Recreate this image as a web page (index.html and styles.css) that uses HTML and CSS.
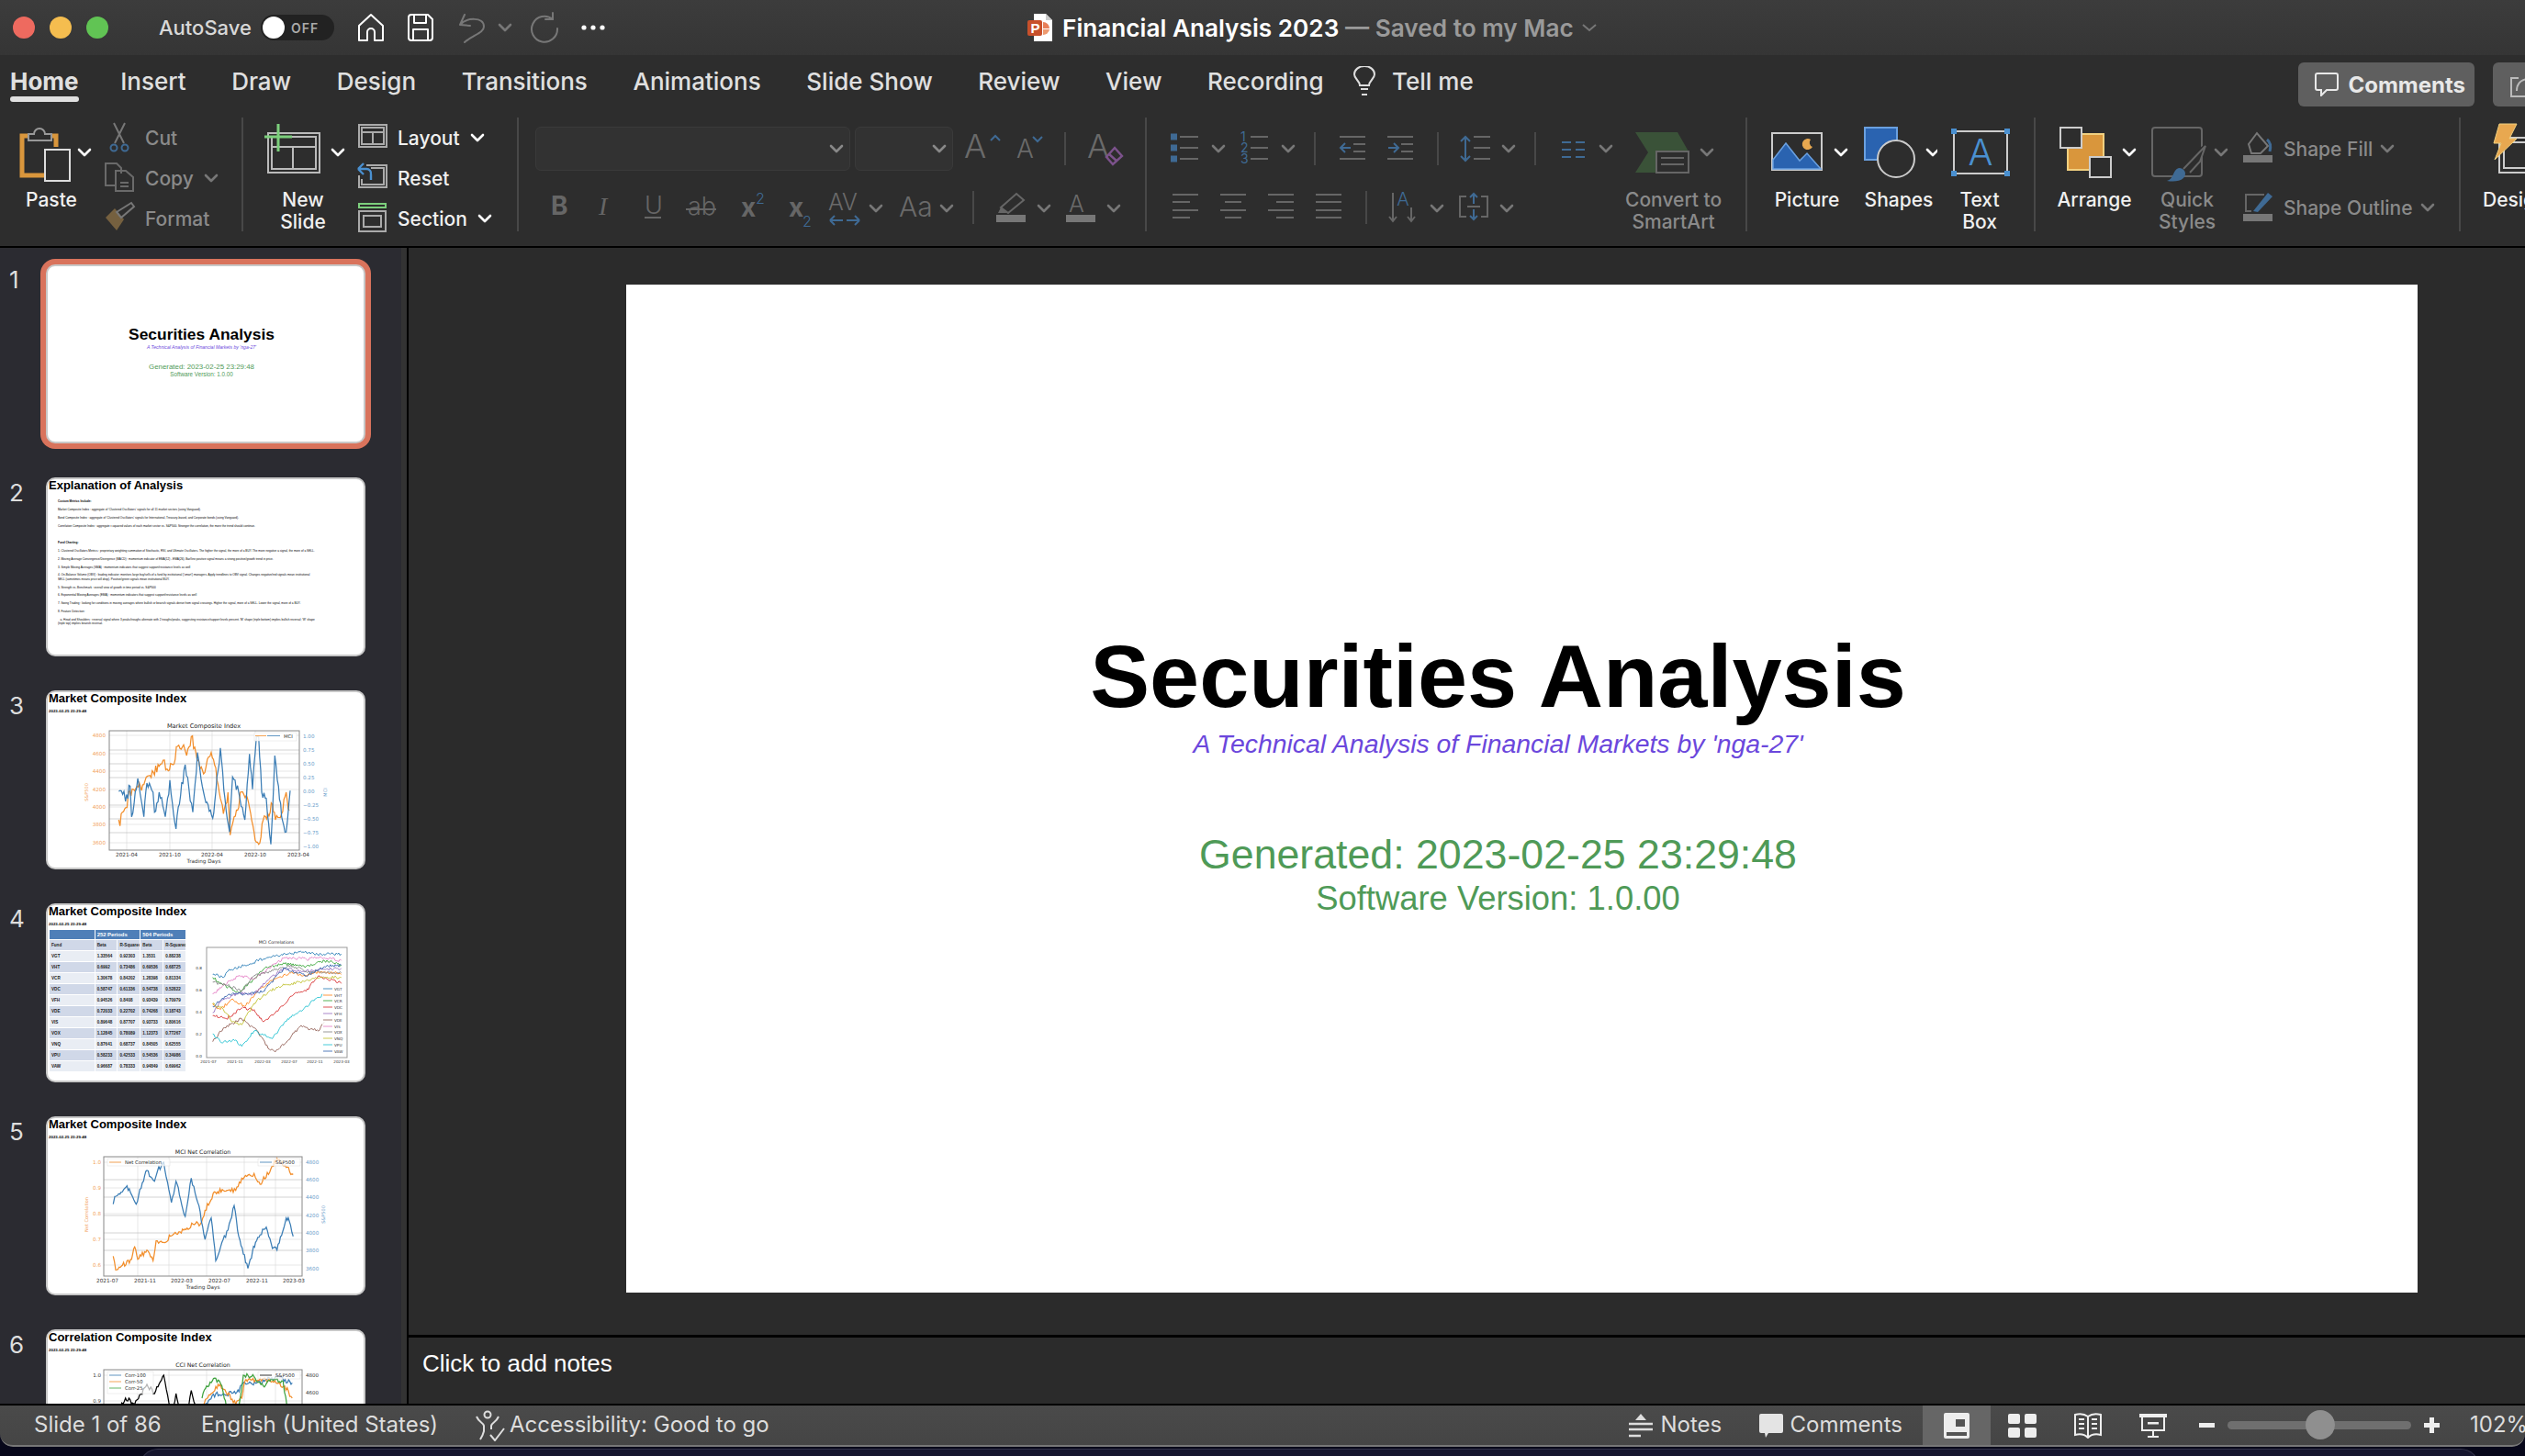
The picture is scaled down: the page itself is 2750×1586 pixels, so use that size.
FILE: index.html
```html
<!DOCTYPE html>
<html lang="en">
<head>
    <meta charset="UTF-8">
    <title>Financial Analysis 2023</title>
    <link rel="stylesheet" href="styles.css">
</head>
<body>

<svg class="sprite"><defs>
    <path id="chev" d="M-6 -3 L0 3 L6 -3" fill="none" stroke-width="2.6" stroke-linecap="round" stroke-linejoin="round"/>
</defs></svg>

<div class="behind"></div>

<div class="window">

    <header class="titlebar">
        <div class="lights">
            <span class="light red"></span>
            <span class="light yellow"></span>
            <span class="light green"></span>
        </div>
        <span class="autosave">AutoSave</span>
        <div class="toggle"><span class="knob"></span><span class="toggle-text">OFF</span></div>
        <svg class="qa-home" width="30" height="32" viewBox="0 0 30 32"><path d="M2 14 L15 2 L28 14 V30 H19 V21 A4 4 0 0 0 11 21 V30 H2 Z" fill="none" stroke="#fff" stroke-width="2" stroke-linejoin="round"/></svg>
        <svg class="qa-save" width="28" height="30" viewBox="0 0 28 30"><path d="M4 1 H22 L27 6 V26 A3 3 0 0 1 24 29 H4 A3 3 0 0 1 1 26 V4 A3 3 0 0 1 4 1 Z M7 1 V10 H20 V1 M6 29 V17 H22 V29" fill="none" stroke="#fff" stroke-width="2" stroke-linejoin="round"/></svg>
        <svg class="qa-undo" width="62" height="34" viewBox="0 0 62 34"><path d="M1 14 L6 3 M1 14 L12 15 M1 14 C8 6 27 5 27 16 C27 23 15 25 6 33" fill="none" stroke="#777" stroke-width="2" stroke-linecap="round"/><use href="#chev" x="50" y="17" stroke="#777"/></svg>
        <svg class="qa-redo" width="34" height="34" viewBox="0 0 34 34"><path d="M26 8 A14 14 0 1 0 31 18 M26 1 V8 H18" fill="none" stroke="#777" stroke-width="2" stroke-linecap="round"/></svg>
        <svg class="qa-more" width="26" height="6" viewBox="0 0 26 6"><circle cx="3" cy="3" r="2.6" fill="#fff"/><circle cx="13" cy="3" r="2.6" fill="#fff"/><circle cx="23" cy="3" r="2.6" fill="#fff"/></svg>
        <svg class="doc-icon" width="28" height="30" viewBox="0 0 28 30"><path d="M7 0 H20 L27 7 V30 H7 Z" fill="#fff"/><path d="M20 0 L27 7 H20 Z" fill="#ccc"/><rect x="0" y="7" width="16" height="17" rx="2" fill="#c8502b"/><path d="M17 9 A7 7 0 0 1 24 16 H17 Z" fill="#e8805a"/><path d="M17 17 H24 A7 7 0 0 1 17 23 Z" fill="#ee9a70"/><text x="3.5" y="21" class="doc-letter">P</text></svg>
        <span class="doc-title"><b>Financial Analysis 2023</b><span class="doc-saved"> — Saved to my Mac</span></span>
        <svg class="doc-chev" width="16" height="10" viewBox="0 0 16 10"><path d="M1 2 L8 8 L15 2" fill="none" stroke="#777" stroke-width="2"/></svg>
    </header>

    <nav class="tabs">
        <a class="tab active">Home</a>
        <a class="tab">Insert</a>
        <a class="tab">Draw</a>
        <a class="tab">Design</a>
        <a class="tab">Transitions</a>
        <a class="tab">Animations</a>
        <a class="tab">Slide Show</a>
        <a class="tab">Review</a>
        <a class="tab">View</a>
        <a class="tab">Recording</a>
        <div class="tell-me">
            <svg width="24" height="32" viewBox="0 0 24 32"><path d="M7 21 C7 16 1 14 1 9 A11 9 0 0 1 23 9 C23 14 17 16 17 21 Z M8 25 H16 M9 31 H15" fill="none" stroke="#ddd" stroke-width="2"/></svg>
            <span>Tell me</span>
        </div>
        <button class="tab-btn comments-btn">
            <svg width="26" height="26" viewBox="0 0 26 26"><path d="M3 1 H23 A2 2 0 0 1 25 3 V17 A2 2 0 0 1 23 19 H13 L7 25 V19 H3 A2 2 0 0 1 1 17 V3 A2 2 0 0 1 3 1 Z" fill="none" stroke="#e8e8e8" stroke-width="2"/></svg>
            Comments
        </button>
        <button class="tab-btn share-btn">
            <svg width="30" height="30" viewBox="0 0 30 30"><path d="M10 8 H2 V28 H28 M8 22 C8 12 15 9 22 9 M18 3 L24 9 L18 15" fill="none" stroke="#bbb" stroke-width="2"/></svg>
        </button>
    </nav>

    <section class="ribbon">

        <div class="group clipboard">
            <div class="big paste-btn">
                <svg width="112" height="78" viewBox="0 128 112 78">
                    <path d="M30 148 H24 V191 H50 M56 148 H61 V160" fill="none" stroke="#d9963c" stroke-width="5"/>
                    <path d="M31 153 V146 H37 A6 6 0 0 1 49 146 H56 V153 Z" fill="#2d2d2d" stroke="#999" stroke-width="2"/>
                    <rect x="49" y="163" width="27" height="34" fill="#2d2d2d" stroke="#ddd" stroke-width="2"/>
                    <use href="#chev" x="92" y="166" stroke="#fff"/>
                </svg>
                <span class="big-label">Paste</span>
            </div>
            <div class="stack">
                <div class="small off">
                    <svg width="46" height="44" viewBox="112 129 46 44"><path d="M124 135 L135 157 M136 135 L125 157" stroke="#777" stroke-width="2" fill="none"/><circle cx="124" cy="162" r="3.5" fill="none" stroke="#3f6a94" stroke-width="2"/><circle cx="136" cy="162" r="3.5" fill="none" stroke="#3f6a94" stroke-width="2"/></svg>
                    <span>Cut</span>
                </div>
                <div class="small off">
                    <svg width="46" height="44" viewBox="112 173 46 44"><path d="M125 203 H115 V179 H127 L132 184 V190 M126 187 H137 L145 194 V209 H126 Z M131 200 H140 M131 204 H140" fill="none" stroke="#6a6a6a" stroke-width="2"/></svg>
                    <span>Copy</span>
                    <svg class="tail" width="16" height="10" viewBox="-8 -5 16 10"><use href="#chev" stroke="#777"/></svg>
                </div>
                <div class="small off">
                    <svg width="46" height="44" viewBox="112 217 46 44"><path d="M115 238 L125 228 L135 240 L127 252 Z" fill="#75603f"/><path d="M127 232 L143 222 L146 226 L132 238 Z" fill="none" stroke="#777" stroke-width="2"/></svg>
                    <span>Format</span>
                </div>
            </div>
        </div>
        <div class="sep"></div>

        <div class="group slides">
            <div class="big new-slide-btn">
                <svg width="120" height="78" viewBox="265 128 120 78">
                    <path d="M292 145 H348 V188 H292 Z M296 149 H344 V184 H296 Z M296 160 H344 M319 160 V184" fill="none" stroke="#bbb" stroke-width="2"/>
                    <path d="M303 135 V165 M288 149 H318" stroke="#7ccf7c" stroke-width="3"/>
                    <use href="#chev" x="368" y="166" stroke="#fff"/>
                </svg>
                <span class="big-label">New<br>Slide</span>
            </div>
            <div class="stack">
                <div class="small">
                    <svg width="48" height="44" viewBox="385 129 48 44"><path d="M391 137 H421 V161 H391 Z M394 140 H418 V158 H394 Z M394 145 H418 M406 145 V158" fill="none" stroke="#aaa" stroke-width="2"/></svg>
                    <span>Layout</span>
                    <svg class="tail" width="16" height="10" viewBox="-8 -5 16 10"><use href="#chev" stroke="#fff"/></svg>
                </div>
                <div class="small">
                    <svg width="48" height="44" viewBox="385 173 48 44"><path d="M399 181 H421 V205 H391 V192 M394 196 V202 H418 V184 H404" fill="none" stroke="#aaa" stroke-width="2"/><path d="M390 185 L396 179 M390 185 L396 191 M390 185 H399 A5 5 0 0 1 404 191 V197" fill="none" stroke="#4a90d0" stroke-width="2.4"/></svg>
                    <span>Reset</span>
                </div>
                <div class="small">
                    <svg width="48" height="44" viewBox="385 217 48 44"><rect x="391" y="223" width="29" height="4" fill="none" stroke="#7ccf7c" stroke-width="2"/><path d="M391 231 H420 V253 H391 Z M396 236 H415 V248 H396 Z" fill="none" stroke="#aaa" stroke-width="2"/></svg>
                    <span>Section</span>
                    <svg class="tail" width="16" height="10" viewBox="-8 -5 16 10"><use href="#chev" stroke="#fff"/></svg>
                </div>
            </div>
        </div>
        <div class="sep"></div>

        <div class="group font-group">
            <div class="font-row">
                <div class="dropdown font-name"><svg width="16" height="10" viewBox="-8 -5 16 10"><use href="#chev" stroke="#888"/></svg></div>
                <div class="dropdown font-size"><svg width="16" height="10" viewBox="-8 -5 16 10"><use href="#chev" stroke="#888"/></svg></div>
                <svg class="font-tools" width="198" height="50" viewBox="1042 138 198 50">
                    <text x="1050" y="172" class="ico-a big-a">A</text>
                    <path d="M1079 153 L1084 148 L1089 153" fill="none" stroke="#3f6a94" stroke-width="2"/>
                    <text x="1107" y="172" class="ico-a mid-a">A</text>
                    <path d="M1125 149 L1130 154 L1135 149" fill="none" stroke="#3f6a94" stroke-width="2"/>
                    <path d="M1160 144 V180" stroke="#484848" stroke-width="2"/>
                    <text x="1184" y="172" class="ico-a big-a">A</text>
                    <path d="M1205 171 L1214 161 L1222 170 L1212 179 Z M1208 168 L1217 176" fill="none" stroke="#7c528c" stroke-width="2.4"/>
                </svg>
            </div>
            <svg class="font-row2" width="650" height="50" viewBox="590 205 650 50">
                <text x="600" y="234" class="ico-b">B</text>
                <text x="652" y="234" class="ico-i">I</text>
                <text x="702" y="233" class="ico-u">U</text>
                <path d="M702 237 H720" stroke="#666" stroke-width="2"/>
                <text x="749" y="234" class="ico-u">ab</text>
                <path d="M747 228 H780" stroke="#666" stroke-width="2"/>
                <text x="807" y="236" class="ico-b">x</text>
                <text x="823" y="222" class="ico-sub">2</text>
                <text x="859" y="236" class="ico-b">x</text>
                <text x="874" y="247" class="ico-sub">2</text>
                <text x="902" y="229" class="ico-a av">AV</text>
                <path d="M904 240 H918 M904 240 L909 235 M904 240 L909 245 M936 240 H922 M936 240 L931 235 M936 240 L931 245" fill="none" stroke="#3f6a94" stroke-width="2"/>
                <use href="#chev" x="954" y="227" stroke="#777"/>
                <text x="979" y="236" class="ico-a aa">Aa</text>
                <use href="#chev" x="1031" y="227" stroke="#777"/>
                <path d="M1060 208 V244" stroke="#484848" stroke-width="2"/>
                <path d="M1090 226 L1107 211 L1115 218 L1098 232 Z" fill="none" stroke="#666" stroke-width="2"/>
                <path d="M1087 232 L1090 226 L1097 232 Z" fill="#666"/>
                <rect x="1085" y="234" width="32" height="8" fill="#777"/>
                <use href="#chev" x="1137" y="227" stroke="#777"/>
                <text x="1164" y="231" class="ico-a av">A</text>
                <rect x="1161" y="234" width="32" height="8" fill="#777"/>
                <use href="#chev" x="1213" y="227" stroke="#777"/>
            </svg>
        </div>
        <div class="sep"></div>

        <div class="group para-group">
            <div class="para-rows">
                <svg width="521" height="50" viewBox="1249 138 521 50">
                    <path d="M1275 149 H1282 M1275 161 H1282 M1275 173 H1282" stroke="#3f6a94" stroke-width="7"/>
                    <path d="M1285 149 H1305 M1285 161 H1305 M1285 173 H1305" stroke="#666" stroke-width="2"/>
                    <use href="#chev" x="1327" y="162" stroke="#777"/>
                    <text x="1351" y="154" class="ico-num">1</text><text x="1351" y="166" class="ico-num">2</text><text x="1351" y="178" class="ico-num">3</text>
                    <path d="M1362 149 H1381 M1362 161 H1381 M1362 173 H1381" stroke="#666" stroke-width="2"/>
                    <use href="#chev" x="1403" y="162" stroke="#777"/>
                    <path d="M1432 144 V180" stroke="#484848" stroke-width="2"/>
                    <path d="M1459 149 H1487 M1474 157 H1487 M1474 165 H1487 M1459 173 H1487 M1511 149 H1539 M1526 157 H1539 M1526 165 H1539 M1511 173 H1539" stroke="#666" stroke-width="2"/>
                    <path d="M1471 161 H1460 M1465 156 L1460 161 L1465 166 M1512 161 H1523 M1518 156 L1523 161 L1518 166" fill="none" stroke="#3f6a94" stroke-width="2"/>
                    <path d="M1566 144 V180" stroke="#484848" stroke-width="2"/>
                    <path d="M1596 150 V174 M1591 154 L1596 149 L1601 154 M1591 170 L1596 175 L1601 170" fill="none" stroke="#3f6a94" stroke-width="2"/>
                    <path d="M1605 149 H1623 M1605 161 H1623 M1605 173 H1623" stroke="#666" stroke-width="2"/>
                    <use href="#chev" x="1643" y="162" stroke="#777"/>
                    <path d="M1672 144 V180" stroke="#484848" stroke-width="2"/>
                    <path d="M1701 155 H1711 M1716 155 H1726 M1701 163 H1711 M1716 163 H1726 M1701 171 H1711 M1716 171 H1726" stroke="#3f6a94" stroke-width="2"/>
                    <use href="#chev" x="1749" y="162" stroke="#777"/>
                </svg>
                <svg class="para-row2" width="521" height="50" viewBox="1249 205 521 50">
                    <path d="M1277 212 H1305 M1277 220 H1296 M1277 229 H1305 M1277 237 H1296 M1329 212 H1357 M1334 220 H1352 M1329 229 H1357 M1334 237 H1352 M1381 212 H1409 M1390 220 H1409 M1381 229 H1409 M1390 237 H1409 M1433 212 H1461 M1433 220 H1461 M1433 229 H1461 M1433 237 H1461" stroke="#666" stroke-width="2"/>
                    <path d="M1488 208 V244" stroke="#484848" stroke-width="2"/>
                    <path d="M1517 210 V241 M1513 236 L1517 241 L1521 236 M1537 226 V241 M1533 236 L1537 241 L1541 236" fill="none" stroke="#666" stroke-width="2"/>
                    <text x="1528" y="224" class="ico-a dir-a">A</text>
                    <use href="#chev" x="1565" y="227" stroke="#777"/>
                    <path d="M1597 214 H1590 V236 H1597 M1613 214 H1620 V236 H1613 M1598 225 H1612" fill="none" stroke="#666" stroke-width="2"/>
                    <path d="M1605 222 V211 M1601 215 L1605 211 L1609 215 M1605 228 V239 M1601 235 L1605 239 L1609 235" fill="none" stroke="#3f6a94" stroke-width="2"/>
                    <use href="#chev" x="1641" y="227" stroke="#777"/>
                </svg>
            </div>
            <div class="big off smartart-btn">
                <svg width="102" height="78" viewBox="1770 128 102 78">
                    <path d="M1779 144 H1825 L1837 165 V168 H1802 V188 H1779 L1793 166 Z" fill="#3a5238"/>
                    <rect x="1802" y="165" width="35" height="23" fill="#2d2d2d" stroke="#666" stroke-width="2"/>
                    <path d="M1807 172 H1832 M1807 179 H1832" stroke="#666" stroke-width="2"/>
                    <use href="#chev" x="1857" y="166" stroke="#777"/>
                </svg>
                <span class="big-label">Convert to<br>SmartArt</span>
            </div>
        </div>
        <div class="sep"></div>

        <div class="group insert-group">
            <div class="big picture-btn">
                <svg width="116" height="78" viewBox="1910 128 116 78">
                    <rect x="1930" y="145" width="54" height="40" fill="#2d2d2d" stroke="#ccc" stroke-width="2"/>
                    <path d="M1931 184 V174 L1945 156 L1960 175 L1968 167 L1983 184 Z" fill="#2a63b0" stroke="#6aa0e0" stroke-width="1.5"/>
                    <path d="M1972 152 A6 6 0 1 0 1974 160 A5 5 0 0 1 1972 152 Z" fill="#e8a850"/>
                    <use href="#chev" x="2005" y="166" stroke="#fff"/>
                </svg>
                <span class="big-label">Picture</span>
            </div>
            <div class="big shapes-btn">
                <svg width="84" height="78" viewBox="2026 128 84 78">
                    <rect x="2031" y="139" width="35" height="35" fill="#2a63b0" stroke="#6aa0e0" stroke-width="2"/>
                    <circle cx="2065" cy="173" r="20" fill="#2d2d2d" stroke="#ccc" stroke-width="2"/>
                    <use href="#chev" x="2105" y="166" stroke="#fff"/>
                </svg>
                <span class="big-label">Shapes</span>
            </div>
            <div class="big textbox-btn">
                <svg width="92" height="78" viewBox="2110 128 92 78">
                    <rect x="2128" y="143" width="58" height="46" fill="none" stroke="#ccc" stroke-width="2"/>
                    <path d="M2125 140 h6 v6 h-6 Z M2183 140 h6 v6 h-6 Z M2125 186 h6 v6 h-6 Z M2183 186 h6 v6 h-6 Z" fill="#4a90d0"/>
                    <text x="2157" y="180" class="ico-a box-a">A</text>
                </svg>
                <span class="big-label">Text<br>Box</span>
            </div>
        </div>
        <div class="sep"></div>

        <div class="group arrange-group">
            <div class="big arrange-btn">
                <svg width="96" height="78" viewBox="2233 128 96 78">
                    <rect x="2252" y="146" width="39" height="39" fill="#d9963c" stroke="#f0d080" stroke-width="2"/>
                    <rect x="2244" y="139" width="23" height="22" fill="#2d2d2d" stroke="#ccc" stroke-width="2"/>
                    <rect x="2276" y="171" width="23" height="22" fill="#2d2d2d" stroke="#ccc" stroke-width="2"/>
                    <use href="#chev" x="2319" y="166" stroke="#fff"/>
                </svg>
                <span class="big-label">Arrange</span>
            </div>
            <div class="big off quick-btn">
                <svg width="106" height="78" viewBox="2329 128 106 78">
                    <rect x="2344" y="139" width="54" height="53" rx="3" fill="none" stroke="#666" stroke-width="2"/>
                    <path d="M2376 183 L2402 160" stroke="#2d2d2d" stroke-width="6"/>
                    <path d="M2378 184 L2402 159 L2396 176 L2385 188" fill="#2d2d2d" stroke="#666" stroke-width="2"/>
                    <path d="M2360 197 C2368 195 2366 185 2373 183 C2380 183 2382 190 2378 194 C2374 198 2366 198 2360 197 Z" fill="#3f6a94"/>
                    <use href="#chev" x="2419" y="166" stroke="#777"/>
                </svg>
                <span class="big-label">Quick<br>Styles</span>
            </div>
            <div class="stack stack-two">
                <div class="small off">
                    <svg width="52" height="64" viewBox="2435 131 52 64"><path d="M2449 158 L2458 146 L2470 160 L2462 168 H2452 Z" fill="none" stroke="#777" stroke-width="2"/><path d="M2469 153 C2473 156 2473 162 2472 166" fill="none" stroke="#3f6a94" stroke-width="3"/><rect x="2443" y="170" width="32" height="8" fill="#777"/></svg>
                    <span>Shape Fill</span>
                    <svg class="tail fill-tail" width="16" height="10" viewBox="-8 -5 16 10"><use href="#chev" stroke="#777"/></svg>
                </div>
                <div class="small off">
                    <svg width="52" height="64" viewBox="2435 195 52 64"><path d="M2466 213 H2446 V231 H2452" fill="none" stroke="#666" stroke-width="2"/><path d="M2454 231 L2470 211 L2475 215 L2459 232 Z" fill="#3f6a94"/><rect x="2443" y="234" width="32" height="8" fill="#777"/></svg>
                    <span>Shape Outline</span>
                    <svg class="tail fill-tail" width="16" height="10" viewBox="-8 -5 16 10"><use href="#chev" stroke="#777"/></svg>
                </div>
            </div>
        </div>
        <div class="sep"></div>

        <div class="group designer">
            <div class="big designer-btn">
                <svg width="100" height="78" viewBox="2680 128 100 78">
                    <path d="M2722 150 H2760 V188 H2722 Z M2727 155 H2760 V183 H2727 Z" fill="none" stroke="#ccc" stroke-width="2"/>
                    <path d="M2722 135 H2741 L2733 151 H2741 L2717 174 L2724 156 H2716 Z" fill="#e8a850" stroke="#f0d080" stroke-width="1"/>
                </svg>
                <span class="big-label">Designer</span>
            </div>
        </div>
    </section>

    <div class="workspace">
        <aside class="sidebar">
            <div class="thumb-row">
                <span class="thumb-num">1</span>
                <div class="thumb selected cover">
                    <div class="cover-title">Securities Analysis</div>
                    <div class="cover-sub">A Technical Analysis of Financial Markets by 'nga-27'</div>
                    <div class="cover-gen">Generated: 2023-02-25 23:29:48</div>
                    <div class="cover-ver">Software Version: 1.0.00</div>
                </div>
            </div>

            <div class="thumb-row">
                <span class="thumb-num">2</span>
                <div class="thumb">
                    <div class="thumb-title">Explanation of Analysis</div>
                    <div class="explain">
                        <p class="explain-head">Custom Metrics Include:</p>
                        <p>Market Composite Index : aggregate of 'Clustered Oscillators' signals for all 11 market sectors (using Vanguard).</p>
                        <p>Bond Composite Index : aggregate of 'Clustered Oscillators' signals for International, Treasury-based, and Corporate bonds (using Vanguard).</p>
                        <p>Correlation Composite Index : aggregate r-squared values of each market sector vs. S&amp;P500. Stronger the correlation, the more the trend should continue.</p>
                        <p class="explain-head gap">Fund Charting:</p>
                        <p>1. Clustered Oscillators Metrics : proprietary weighting summation of Stochastic, RSI, and Ultimate Oscillators. The higher the signal, the more of a BUY. The more negative a signal, the more of a SELL.</p>
                        <p>2. Moving Average Convergence/Divergence (MACD) : momentum indicator of EMA(12) - EMA(26). Bar/line positive signal means a strong positive/growth trend in price.</p>
                        <p>3. Simple Moving Averages (SMA) : momentum indicators that suggest support/resistance levels as well</p>
                        <p>4. On-Balance Volume (OBV) : leading indicator; monitors large buy/sells of a fund by institutional ('smart') managers. Apply trendlines to OBV signal. Changes negative/red signals mean institutional SELL (sometimes means price will drop). Positive/green signals mean institutional BUY.</p>
                        <p>5. Strength vs. Benchmark : overall view of growth in time period vs. S&amp;P500</p>
                        <p>6. Exponential Moving Averages (EMA) : momentum indicators that suggest support/resistance levels as well</p>
                        <p>7. Swing Trading : looking for conditions in moving averages where bullish or bearish signals derive from signal crossings. Higher the signal, more of a SELL. Lower the signal, more of a BUY.</p>
                        <p>8. Feature Detection:</p>
                        <p>&nbsp;&nbsp;&nbsp;a. Head and Shoulders : reversal signal where 3 peaks/troughs alternate with 2 troughs/peaks, suggesting resistance/support levels present. 'M' shape (triple bottom) implies bullish reversal; 'W' shape (triple top) implies bearish reversal.</p>
                    </div>
                </div>
            </div>

            <div class="thumb-row">
                <span class="thumb-num">3</span>
                <div class="thumb">
                    <div class="thumb-title">Market Composite Index</div>
                    <div class="thumb-date">2023-02-25 23:29:48</div>
                    <svg class="chart" id="chart3" width="344" height="165" viewBox="2 28 344 165">
                        <text x="172" y="41" class="c-title" text-anchor="middle">Market Composite Index</text>
                        <path d="M69 49 H276 M69 69 H276 M69 88 H276 M69 108 H276 M69 127 H276 M69 146 H276 M69 166 H276 M88 44 V174 M135 44 V174 M181 44 V174 M228 44 V174" stroke="#ddd" stroke-width="0.7"/>
                        <path d="M69 65 H276 M69 80 H276 M69 95 H276 M69 125 H276 M69 140 H276 M69 155 H276" stroke="#c0c0c0" stroke-width="0.7"/>
                        <g class="c-left">
                            <text x="65" y="51">4800</text><text x="65" y="71">4600</text><text x="65" y="90">4400</text><text x="65" y="110">4200</text><text x="65" y="129">4000</text><text x="65" y="148">3800</text><text x="65" y="168">3600</text>
                        </g>
                        <g class="c-right">
                            <text x="280" y="52">1.00</text><text x="280" y="67">0.75</text><text x="280" y="82">0.50</text><text x="280" y="97">0.25</text><text x="280" y="112">0.00</text><text x="280" y="127">−0.25</text><text x="280" y="142">−0.50</text><text x="280" y="157">−0.75</text><text x="280" y="172">−1.00</text>
                        </g>
                        <text class="c-axis orange" transform="translate(46 111) rotate(-90)" text-anchor="middle">S&amp;P500</text>
                        <text class="c-axis blue" transform="translate(306 111) rotate(-90)" text-anchor="middle">MCI</text>
                        <g class="c-x" text-anchor="middle">
                            <text x="88" y="181">2021-04</text><text x="135" y="181">2021-10</text><text x="181" y="181">2022-04</text><text x="228" y="181">2022-10</text><text x="275" y="181">2023-04</text>
                            <text x="172" y="188">Trading Days</text>
                        </g>
                        <g class="lines"></g>
                        <rect x="69" y="44" width="207" height="130" fill="none" stroke="#888" stroke-width="1"/>
                        <rect x="227" y="46" width="46" height="9" fill="#fff" fill-opacity="0.85" stroke="#ddd" stroke-width="0.5"/>
                        <path d="M228 49.5 H240" stroke="#f28e2b" stroke-width="0.8"/><path d="M241 49.5 H255" stroke="#3b7db5" stroke-width="0.8"/>
                        <text x="259" y="51.5" class="c-legend">MCI</text>
                    </svg>
                </div>
            </div>

            <div class="thumb-row">
                <span class="thumb-num">4</span>
                <div class="thumb">
                    <div class="thumb-title">Market Composite Index</div>
                    <div class="thumb-date">2023-02-25 23:29:48</div>
                    <div class="split">
                        <table class="beta-table">
                            <tr class="head"><th></th><th colspan="2">252 Periods</th><th colspan="2">504 Periods</th></tr>
                            <tr class="sub"><td>Fund</td><td>Beta</td><td>R-Squared</td><td>Beta</td><td>R-Squared</td></tr>
                            <tr><td>VGT</td><td>1.33564</td><td>0.92303</td><td>1.3531</td><td>0.88238</td></tr>
                            <tr><td>VHT</td><td>0.6992</td><td>0.73486</td><td>0.69536</td><td>0.68725</td></tr>
                            <tr><td>VCR</td><td>1.30678</td><td>0.84202</td><td>1.28398</td><td>0.81334</td></tr>
                            <tr><td>VDC</td><td>0.58747</td><td>0.61336</td><td>0.54738</td><td>0.52822</td></tr>
                            <tr><td>VFH</td><td>0.94526</td><td>0.8408</td><td>0.93439</td><td>0.70979</td></tr>
                            <tr><td>VDE</td><td>0.72033</td><td>0.22702</td><td>0.74268</td><td>0.18743</td></tr>
                            <tr><td>VIS</td><td>0.89648</td><td>0.87707</td><td>0.93733</td><td>0.80616</td></tr>
                            <tr><td>VOX</td><td>1.12845</td><td>0.78089</td><td>1.12373</td><td>0.77267</td></tr>
                            <tr><td>VNQ</td><td>0.87641</td><td>0.68737</td><td>0.84505</td><td>0.62555</td></tr>
                            <tr><td>VPU</td><td>0.58233</td><td>0.42533</td><td>0.54536</td><td>0.34986</td></tr>
                            <tr><td>VAW</td><td>0.96687</td><td>0.78333</td><td>0.94849</td><td>0.69962</td></tr>
                        </table>
                    </div>
                    <svg class="chart overlay" id="chart4" width="344" height="165" viewBox="2 28 344 165">
                        <text x="251" y="44" class="c-title tiny" text-anchor="middle">MCI Correlations</text>
                        <g class="c-dark" text-anchor="end"><text x="170" y="71.5">0.8</text><text x="170" y="95.5">0.6</text><text x="170" y="119.5">0.4</text><text x="170" y="143.5">0.2</text><text x="170" y="167.5">0.0</text></g>
                        <g class="c-dark" text-anchor="middle"><text x="177" y="174">2021-07</text><text x="206" y="174">2021-11</text><text x="236" y="174">2022-03</text><text x="265" y="174">2022-07</text><text x="293" y="174">2022-11</text><text x="322" y="174">2023-03</text></g>
                        <g class="lines"></g>
                        <rect x="175" y="48" width="153" height="120" fill="none" stroke="#999" stroke-width="1"/>
                        <rect x="301" y="89" width="25" height="75" fill="#fff" fill-opacity="0.85"/>
                        <g class="c-dark"><text x="314" y="95">VGT</text><text x="314" y="102">VHT</text><text x="314" y="108">VCR</text><text x="314" y="115">VDC</text><text x="314" y="122">VFH</text><text x="314" y="129">VDE</text><text x="314" y="136">VIS</text><text x="314" y="142">VOX</text><text x="314" y="149">VNQ</text><text x="314" y="156">VPU</text><text x="314" y="163">VAW</text></g>
                        <g stroke-width="0.8"><path d="M302 93 H312" stroke="#1f77b4"/><path d="M302 100 H312" stroke="#ff7f0e"/><path d="M302 106 H312" stroke="#2ca02c"/><path d="M302 113 H312" stroke="#d62728"/><path d="M302 120 H312" stroke="#9467bd"/><path d="M302 127 H312" stroke="#8c564b"/><path d="M302 134 H312" stroke="#e377c2"/><path d="M302 140 H312" stroke="#7f7f7f"/><path d="M302 147 H312" stroke="#bcbd22"/><path d="M302 154 H312" stroke="#17becf"/><path d="M302 161 H312" stroke="#2a5caa"/></g>
                    </svg>
                </div>
            </div>

            <div class="thumb-row">
                <span class="thumb-num">5</span>
                <div class="thumb">
                    <div class="thumb-title">Market Composite Index</div>
                    <div class="thumb-date">2023-02-25 23:29:48</div>
                    <svg class="chart" id="chart5" width="344" height="165" viewBox="2 28 344 165">
                        <text x="171" y="41" class="c-title small" text-anchor="middle">MCI Net Correlation</text>
                        <path d="M63 50 H279 M63 78 H279 M63 106 H279 M63 134 H279 M63 162 H279 M100 44 V174 M134 44 V174 M175 44 V174 M216 44 V174 M250 44 V174" stroke="#ddd" stroke-width="0.7"/>
                        <path d="M63 69 H279 M63 88 H279 M63 108 H279 M63 127 H279 M63 146 H279" stroke="#c0c0c0" stroke-width="0.7"/>
                        <g class="c-left"><text x="60" y="52">1.0</text><text x="60" y="80">0.9</text><text x="60" y="108">0.8</text><text x="60" y="136">0.7</text><text x="60" y="164">0.6</text></g>
                        <g class="c-right"><text x="283" y="52">4800</text><text x="283" y="71">4600</text><text x="283" y="90">4400</text><text x="283" y="110">4200</text><text x="283" y="129">4000</text><text x="283" y="148">3800</text><text x="283" y="168">3600</text></g>
                        <text class="c-axis orange" transform="translate(46 107) rotate(-90)" text-anchor="middle">Net Correlation</text>
                        <text class="c-axis blue" transform="translate(304 107) rotate(-90)" text-anchor="middle">S&amp;P500</text>
                        <g class="c-x" text-anchor="middle"><text x="67" y="181">2021-07</text><text x="108" y="181">2021-11</text><text x="148" y="181">2022-03</text><text x="189" y="181">2022-07</text><text x="230" y="181">2022-11</text><text x="270" y="181">2023-03</text><text x="171" y="188">Trading Days</text></g>
                        <g class="lines"></g>
                        <rect x="63" y="44" width="216" height="130" fill="none" stroke="#888" stroke-width="1"/>
                        <rect x="67" y="46" width="68" height="8" fill="#fff" fill-opacity="0.7" stroke="#ddd" stroke-width="0.5"/>
                        <path d="M69 50 H82" stroke="#f28e2b" stroke-width="0.8"/><text x="86" y="52" class="c-legend">Net Correlation</text>
                        <rect x="231" y="46" width="46" height="8" fill="#fff" fill-opacity="0.7" stroke="#ddd" stroke-width="0.5"/>
                        <path d="M233 50 H246" stroke="#3b7db5" stroke-width="0.8"/><text x="250" y="52" class="c-legend">S&amp;P500</text>
                    </svg>
                </div>
            </div>

            <div class="thumb-row">
                <span class="thumb-num">6</span>
                <div class="thumb">
                    <div class="thumb-title">Correlation Composite Index</div>
                    <div class="thumb-date">2023-02-25 23:29:48</div>
                    <svg class="chart" id="chart6" width="344" height="165" viewBox="2 28 344 165">
                        <text x="171" y="41" class="c-title small" text-anchor="middle">CCI Net Correlation</text>
                        <path d="M63 50 H279 M63 78 H279 M100 44 V174 M134 44 V174 M175 44 V174 M216 44 V174 M250 44 V174" stroke="#ddd" stroke-width="0.7"/>
                        <g class="c-dark bigger" text-anchor="end"><text x="60" y="52">1.0</text><text x="60" y="80">0.9</text></g>
                        <g class="c-dark bigger"><text x="283" y="52">4800</text><text x="283" y="71">4600</text></g>
                        <g class="lines"></g>
                        <rect x="63" y="44" width="216" height="130" fill="none" stroke="#888" stroke-width="1"/>
                        <rect x="67" y="46" width="50" height="24" fill="#fff" fill-opacity="0.7" stroke="#ddd" stroke-width="0.5"/>
                        <path d="M69 50 H82" stroke="#3b7db5" stroke-width="0.8"/><path d="M69 57 H82" stroke="#f28e2b" stroke-width="0.8"/><path d="M69 64 H82" stroke="#3fa33f" stroke-width="0.8"/>
                        <g class="c-legend-group"><text x="86" y="52">Corr-100</text><text x="86" y="59">Corr-50</text><text x="86" y="66">Corr-25</text></g>
                        <rect x="231" y="46" width="46" height="8" fill="#fff" fill-opacity="0.7" stroke="#ddd" stroke-width="0.5"/>
                        <path d="M233 50 H246" stroke="#000" stroke-width="0.8"/><text x="250" y="52" class="c-legend">S&amp;P500</text>
                    </svg>
                </div>
            </div>
        </aside>
        <div class="side-strip"></div>

        <main class="editor">
            <div class="stage">
                <div class="slide">
                    <h1 class="slide-title">Securities Analysis</h1>
                    <div class="slide-sub">A Technical Analysis of Financial Markets by 'nga-27'</div>
                    <div class="slide-gen">Generated: 2023-02-25 23:29:48</div>
                    <div class="slide-ver">Software Version: 1.0.00</div>
                </div>
            </div>
            <div class="notes">Click to add notes</div>
        </main>
    </div>

    <footer class="statusbar">
        <span class="st-slide">Slide 1 of 86</span>
        <span class="st-lang">English (United States)</span>
        <svg class="st-acc" width="32" height="34" viewBox="0 0 32 34"><circle cx="13" cy="5" r="3.5" fill="none" stroke="#ddd" stroke-width="2"/><path d="M1 7 C4 14 8 13 9 17 V23 C8 27 7 29 5 32 M25 7 C22 14 18 13 17 17 V21 M16 27 L21 33 L31 20" fill="none" stroke="#ddd" stroke-width="2"/></svg>
        <span class="st-acc-text">Accessibility: Good to go</span>
        <svg class="st-notes-ico" width="26" height="26" viewBox="0 0 26 26"><path d="M13 0 L19 7 H7 Z" fill="#ddd"/><path d="M0 11 H26 M0 17 H26 M0 24 H13" stroke="#ddd" stroke-width="2.5"/></svg>
        <span class="st-notes">Notes</span>
        <svg class="st-comment-ico" width="26" height="26" viewBox="0 0 26 26"><path d="M2 0 H24 A2 2 0 0 1 26 2 V19 A2 2 0 0 1 24 21 H10 L7 26 L6 21 H2 A2 2 0 0 1 0 19 V2 A2 2 0 0 1 2 0 Z" fill="#e4e4e4"/></svg>
        <span class="st-comments">Comments</span>
        <div class="view-btn active">
            <svg width="28" height="28" viewBox="0 0 28 28"><path d="M2 0 H26 A2 2 0 0 1 28 2 V26 A2 2 0 0 1 26 28 H2 A2 2 0 0 1 0 26 V2 A2 2 0 0 1 2 0 Z" fill="#eee"/><path d="M3 21 H25 V25 H3 Z" fill="#555"/><rect x="13" y="7" width="10" height="8" fill="#555"/></svg>
        </div>
        <div class="view-btn">
            <svg width="32" height="26" viewBox="0 0 32 26"><rect x="0" y="0" width="13" height="11" rx="2" fill="#eee"/><rect x="18" y="0" width="13" height="11" rx="2" fill="#eee"/><rect x="0" y="15" width="13" height="11" rx="2" fill="#eee"/><rect x="18" y="15" width="13" height="11" rx="2" fill="#eee"/></svg>
        </div>
        <div class="view-btn">
            <svg width="30" height="28" viewBox="0 0 30 28"><path d="M15 4 C11 1 5 1 1 2 V24 C5 23 11 23 15 27 C19 23 25 23 29 24 V2 C25 1 19 1 15 4 Z M15 4 V27 M5 7 H11 M5 12 H11 M5 17 H11 M19 7 H25 M19 12 H25 M19 17 H25" fill="none" stroke="#eee" stroke-width="2"/></svg>
        </div>
        <div class="view-btn">
            <svg width="30" height="26" viewBox="0 0 30 26"><rect x="0" y="0" width="30" height="4" fill="#eee"/><path d="M3 3 V18 H27 V3 M15 18 V25 M9 25 H21" fill="none" stroke="#eee" stroke-width="2"/><rect x="9" y="9" width="12" height="2.5" fill="#eee"/></svg>
        </div>
        <div class="zoomer">
            <span class="zoom-minus"></span>
            <div class="zoom-track"><span class="zoom-knob"></span></div>
            <span class="zoom-plus"></span>
        </div>
        <span class="st-zoom">102%</span>
    </footer>
</div>

<script src="charts.js"></script>
</body>
</html>
```
FILE: styles.css
```css
* {
    box-sizing: border-box;
}
html, body {
    margin: 0;
    width: 2750px;
    height: 1586px;
    overflow: hidden;
}
body {
    position: relative;
    background-color: #07071a;
    font-family: Inter, "Noto Sans", sans-serif;
    color: #e0e0e0;
}
.sprite {
    position: absolute;
    width: 0;
    height: 0;
}
/* the window behind this one, showing under the status bar */
.behind {
    position: absolute;
    left: 152px;
    right: 50px;
    top: 1578px;
    height: 20px;
    border: 1px solid #33334a;
    border-radius: 20px 20px 0 0;
    background-color: #15152e;
}
svg {
    display: block;
    flex: none;
}
.window {
    position: relative;
    width: 2750px;
    height: 1576px;
    display: flex;
    flex-direction: column;
    overflow: hidden;
    border-bottom-left-radius: 14px;
    border-bottom-right-radius: 14px;
}

/* title bar */
.titlebar {
    height: 60px;
    flex: none;
    display: flex;
    align-items: center;
    background: linear-gradient(#3c3c3c, #353535);
    padding-left: 14px;
}
.lights {
    display: flex;
    gap: 16px;
}
.light {
    width: 24px;
    height: 24px;
    border-radius: 50%;
}
.red { background-color: #ee6a5f; }
.yellow { background-color: #f5bd4f; }
.green { background-color: #61c454; }
.autosave {
    margin-left: 55px;
    width: 111px;
    font-size: 22px;
    font-weight: 500;
    color: #d8d8d8;
}
.toggle {
    width: 80px;
    height: 28px;
    border-radius: 14px;
    background-color: #222;
    display: flex;
    align-items: center;
    padding-left: 2px;
}
.knob {
    width: 24px;
    height: 24px;
    border-radius: 50%;
    background-color: #fff;
}
.toggle-text {
    margin-left: 7px;
    font-size: 14px;
    font-weight: 600;
    letter-spacing: 1px;
    color: #aaa;
}
.qa-home { margin-left: 25px; }
.qa-save { margin-left: 25px; }
.qa-undo { margin-left: 28px; }
.qa-redo { margin-left: 14px; }
.qa-more { margin-left: 23px; }
.doc-icon { margin-left: 460px; }
.doc-letter {
    font: 700 15px "Liberation Sans", sans-serif;
    fill: #fff;
}
.doc-title {
    margin-left: 10px;
    font-size: 26.2px;
    font-weight: 600;
    color: #fff;
    white-space: nowrap;
}
.doc-title b {
    font-weight: 600;
}
.doc-saved {
    color: #9a9a9a;
}
.doc-chev { margin-left: 9px; }

/* tabs */
.tabs {
    height: 68px;
    flex: none;
    display: flex;
    align-items: center;
    gap: 49.6px;
    padding: 0 0 12px 11px;
    background-color: #2d2d2d;
}
.tab {
    position: relative;
    font-size: 26px;
    font-weight: 500;
    color: #e0e0e0;
    white-space: nowrap;
}
.tab.active {
    font-weight: 700;
    margin-right: -4px;
}
.tab.active::after {
    content: "";
    position: absolute;
    left: 0;
    right: 0;
    bottom: -7px;
    height: 6px;
    border-radius: 3px;
    background-color: #e0e0e0;
}
.tell-me {
    display: flex;
    align-items: center;
    gap: 18px;
    margin-left: -17px;
    font-size: 26px;
    font-weight: 500;
}
.tab-btn {
    align-self: flex-start;
    margin-top: 8px;
    height: 48px;
    border: none;
    border-radius: 6px;
    background-color: #5f5f5f;
    display: flex;
    align-items: center;
    font-family: inherit;
    font-size: 24px;
    font-weight: 700;
    color: #e8e8e8;
}
.comments-btn {
    margin-left: auto;
    width: 192px;
    padding: 0 0 0 18px;
    gap: 10px;
}
.share-btn {
    margin-left: -30px;
    margin-right: -30px;
    width: 65px;
    flex: none;
    padding: 0 0 0 18px;
}

/* ribbon */
.ribbon {
    height: 142px;
    flex: none;
    display: flex;
    background-color: #2d2d2d;
    border-bottom: 2px solid #000;
    overflow: hidden;
}
.group {
    height: 124px;
    flex: none;
    display: flex;
}
.sep {
    width: 2px;
    height: 124px;
    flex: none;
    background-color: #484848;
}
.clipboard { width: 263px; }
.slides { width: 298px; }
.font-group {
    width: 682px;
    flex-direction: column;
    padding-top: 10px;
}
.para-group { width: 652px; }
.insert-group { width: 312px; padding-left: 7px; }
.arrange-group { width: 461px; padding-left: 16px; }
.designer { width: 100px; }

.big {
    flex: none;
    display: flex;
    flex-direction: column;
    align-items: center;
    font-size: 21px;
    font-weight: 500;
    color: #f0f0f0;
}
.big-label {
    text-align: center;
    line-height: 24px;
    white-space: nowrap;
}
.new-slide-btn .big-label {
    padding-left: 10px;
}
.off {
    color: #8a8a8a;
}
.designer-btn {
    align-items: flex-start;
}
.designer-btn .big-label {
    padding-left: 24px;
}
.stack {
    flex: 1;
}
.small {
    height: 44px;
    display: flex;
    align-items: center;
    font-size: 21px;
    font-weight: 500;
    color: #f0f0f0;
}
.small.off {
    color: #8a8a8a;
}
.tail {
    margin-left: 11px;
}
.fill-tail {
    margin-left: 8px;
}
.stack-two {
    padding-top: 2px;
}
.stack-two .small {
    height: 64px;
}

.font-row {
    display: flex;
    height: 50px;
    padding-left: 18px;
    gap: 5px;
}
.dropdown {
    height: 48px;
    border: 1px solid #3a3a3a;
    border-radius: 6px;
    background-color: #323232;
    display: flex;
    align-items: center;
    justify-content: flex-end;
    padding-right: 6px;
}
.font-name { width: 343px; }
.font-size { width: 107px; }
.font-tools { margin-left: -1px; }
.font-row2 {
    margin: 17px 0 0 25px;
}
.para-rows {
    width: 521px;
    padding-top: 10px;
}
.para-row2 {
    margin-top: 17px;
}

/* icon letters */
.ico-a {
    font-family: Inter, sans-serif;
    font-weight: 300;
    fill: #6a6a6a;
}
.big-a { font-size: 36px; }
.mid-a { font-size: 28px; }
.av { font-size: 25px; }
.aa { font-size: 30px; }
.dir-a { font-size: 20px; text-anchor: middle; fill: #3f6a94; }
.box-a { font-size: 40px; text-anchor: middle; fill: #4a90d0; }
.ico-b {
    font: 700 28px Inter, sans-serif;
    fill: #666;
}
.ico-i {
    font: italic 400 28px "Liberation Serif", serif;
    fill: #666;
}
.ico-u {
    font: 300 27px Inter, sans-serif;
    fill: #666;
}
.ico-sub {
    font: 300 16px Inter, sans-serif;
    fill: #3f6a94;
}
.ico-num {
    font: 400 14px Inter, sans-serif;
    fill: #3f6a94;
}

/* main area */
.workspace {
    flex: 1;
    min-height: 0;
    display: flex;
}
.sidebar {
    width: 437px;
    flex: none;
    background-color: #2b2b31;
    padding-top: 18px;
    display: flex;
    flex-direction: column;
    gap: 37px;
    overflow: hidden;
}
.side-strip {
    width: 8px;
    flex: none;
    background-color: #333;
    border-right: 2px solid #000;
}
.thumb-row {
    display: flex;
    flex: none;
}
.thumb-num {
    width: 50px;
    padding: 0 0 0 10px;
    font-size: 26px;
    font-weight: 400;
    line-height: 34px;
    color: #ddd;
}
.thumb {
    position: relative;
    width: 348px;
    height: 195px;
    flex: none;
    background-color: #fff;
    border: 2px solid #c8c8c8;
    border-radius: 10px;
    font-family: "Liberation Sans", Arial, sans-serif;
    color: #000;
    overflow: hidden;
}
.thumb.selected {
    overflow: visible;
    box-shadow: 0 0 0 6px #d9735c;
}
.thumb-title {
    padding: 0 0 0 1px;
    height: 17px;
    font-size: 13px;
    font-weight: 700;
    line-height: 14px;
}
.thumb-date {
    height: 9px;
    padding-left: 1px;
    font-size: 4.4px;
    font-weight: 700;
    line-height: 8px;
}
.cover {
    display: flex;
    flex-direction: column;
    align-items: center;
    padding: 64px 9px 0 0;
}
.cover-title {
    font-size: 17.4px;
    font-weight: 700;
    line-height: 20px;
}
.cover-sub {
    font-size: 5.1px;
    font-style: italic;
    line-height: 7px;
    margin-top: 1px;
    color: #6b47dc;
}
.cover-gen {
    font-size: 7.9px;
    line-height: 9px;
    margin-top: 13px;
    color: #4f9a57;
}
.cover-ver {
    font-size: 6.3px;
    line-height: 7px;
    color: #4f9a57;
}
.explain {
    padding: 5px 0 0 11px;
    width: 292px;
    font-size: 3.15px;
    line-height: 4.2px;
    color: #000;
}
.explain p {
    margin: 0 0 4.7px;
}
.explain-head {
    font-weight: 700;
}
.explain-head.gap {
    margin-top: 14px !important;
}
.chart {
    position: absolute;
    left: 0;
    top: 26px;
    overflow: hidden;
}
.c-title {
    font: 6.6px "DejaVu Sans", sans-serif;
    fill: #222;
}
.c-title.small {
    font-size: 6.2px;
}
.c-title.tiny {
    font-size: 4.7px;
}
.c-left text {
    font: 5.6px "DejaVu Sans", sans-serif;
    fill: #f2a25c;
    text-anchor: end;
}
.c-right text {
    font: 5.6px "DejaVu Sans", sans-serif;
    fill: #6b9ecb;
}
.c-axis {
    font: 5px "DejaVu Sans", sans-serif;
}
.orange { fill: #f2a25c; }
.blue { fill: #6b9ecb; }
.c-x text {
    font: 5.7px "DejaVu Sans", sans-serif;
    fill: #333;
}
.c-dark text {
    font: 4.2px "DejaVu Sans", sans-serif;
    fill: #333;
}
.c-dark.bigger text {
    font-size: 5.5px;
}
.c-legend, .c-legend-group text {
    font: 5.3px "DejaVu Sans", sans-serif;
    fill: #333;
}
.split {
    padding: 0 0 0 1px;
}
.beta-table {
    border-collapse: collapse;
    table-layout: fixed;
    width: 150px;
    font-size: 4.6px;
    font-weight: 700;
    color: #222;
}
.beta-table td, .beta-table th {
    width: 30px;
    height: 12px;
    padding: 0 0 0 2px;
    text-align: left;
    border: 0.5px solid #fff;
    background-color: #e9edf4;
    white-space: nowrap;
    overflow: hidden;
}
.beta-table tr:nth-child(even) td {
    background-color: #d0d8e8;
}
.beta-table th {
    height: 11px;
    background-color: #4f7fb8;
    color: #fff;
    font-size: 5.9px;
    padding-left: 2px;
}
.editor {
    flex: 1;
    min-width: 0;
    display: flex;
    flex-direction: column;
    background-color: #2b2b2b;
}
.stage {
    flex: 1;
    min-height: 0;
    padding: 40px 0 0 237px;
}
.slide {
    width: 1951px;
    height: 1098px;
    background-color: #fff;
    font-family: "Liberation Sans", Arial, sans-serif;
    text-align: center;
    padding: 372px 52px 0 0;
}
.slide-title {
    margin: 0;
    font-size: 97.3px;
    font-weight: 700;
    line-height: 110px;
    color: #000;
}
.slide-sub {
    margin-top: -2px;
    font-size: 28.4px;
    font-style: italic;
    line-height: 40px;
    color: #6b47dc;
}
.slide-gen {
    margin-top: 76px;
    font-size: 44.7px;
    line-height: 50px;
    color: #4f9a57;
}
.slide-ver {
    margin-top: 3px;
    font-size: 36.4px;
    line-height: 40px;
    color: #4f9a57;
}
.notes {
    height: 75px;
    flex: none;
    border-top: 3px solid #000;
    padding: 12px 0 0 15px;
    font-family: "Liberation Sans", Arial, sans-serif;
    font-size: 26px;
    line-height: 32px;
    color: #fff;
}

/* status bar */
.statusbar {
    height: 47px;
    flex: none;
    display: flex;
    align-items: center;
    background: linear-gradient(#4a4a4a, #454545);
    border-top: 2px solid #000;
    border-bottom: 2px solid #777;
    font-size: 24px;
    color: #ddd;
    white-space: nowrap;
    border-bottom-left-radius: 14px;
    border-bottom-right-radius: 14px;
}
.st-slide { margin: -2px 0 0 37px; width: 182px; }
.st-lang { margin-top: -2px; width: 299px; }
.st-acc-text { margin: -2px 0 0 5px; }
.st-notes-ico { margin-left: auto; }
.st-notes { margin: -2px 0 0 9px; width: 107px; }
.st-comments { margin: -2px 0 0 8px; width: 144px; }
.view-btn {
    width: 74px;
    height: 43px;
    flex: none;
    display: flex;
    align-items: center;
    justify-content: center;
    margin-right: -3px;
}
.view-btn.active {
    background-color: #666;
    margin-right: -2px;
}
.zoomer {
    display: flex;
    align-items: center;
    margin-left: 16.5px;
    flex: none;
}
.zoom-minus, .zoom-plus {
    position: relative;
    width: 17px;
    height: 5px;
    background-color: #eee;
}
.zoom-plus::after {
    content: "";
    position: absolute;
    left: 6px;
    top: -6px;
    width: 5px;
    height: 17px;
    background-color: #eee;
}
.zoom-track {
    position: relative;
    width: 200px;
    height: 9px;
    margin: 0 14px;
    border-radius: 5px;
    background-color: #6f6f6f;
}
.zoom-knob {
    position: absolute;
    left: 85px;
    top: -12px;
    width: 32px;
    height: 32px;
    border-radius: 50%;
    background-color: #8f8f8f;
}
.st-zoom {
    margin: -2px 0 0 33px;
    width: 60px;
    flex: none;
}
```
FILE: charts.js
```js
// waypoints are read off the reference slides, the wiggle between them is seeded noise
let seed = 27;
function rand() {
    seed = (seed * 16807) % 2147483647;
    return seed / 2147483647 - 0.5;
}

function build(points, top, noise) {
    let out = [];
    for (let i = 0; i < points.length - 1; i++) {
        let a = points[i], b = points[i + 1];
        let steps = Math.max(1, Math.round(Math.abs(b[0] - a[0]) / 4));
        for (let s = 0; s < steps; s++) {
            let t = s / steps;
            let x = a[0] + (b[0] - a[0]) * t;
            let y = a[1] + (b[1] - a[1]) * t + (s ? rand() * noise : 0);
            out.push((x / 3 - 50).toFixed(1) + "," + ((y - top) / 3).toFixed(1));
        }
    }
    let last = points[points.length - 1];
    out.push((last[0] / 3 - 50).toFixed(1) + "," + ((last[1] - top) / 3).toFixed(1));
    return out.join(" ");
}

function draw(id, top, noise, width, lines) {
    let group = document.querySelector("#" + id + " .lines");
    lines.forEach(function (line) {
        let el = document.createElementNS("http://www.w3.org/2000/svg", "polyline");
        el.setAttribute("points", build(line[1], top, noise));
        el.setAttribute("fill", "none");
        el.setAttribute("stroke", line[0]);
        el.setAttribute("stroke-width", width);
        group.appendChild(el);
    });
}

draw("chart3", 67, 34, 1.25, [
    ["#f28e2b", [[388,490],[392,510],[400,465],[415,450],[420,400],[440,395],[470,375],[490,345],[520,315],[533,295],[550,330],[565,310],[580,250],[600,245],[610,280],[625,218],[640,270],[650,300],[665,340],[690,270],[705,320],[720,420],[730,470],[745,400],[752,540],[765,480],[780,450],[785,400],[805,410],[815,450],[830,530],[845,570],[860,490],[875,470],[890,440],[900,490],[920,470],[935,400],[945,460]]],
    ["#3b7db5", [[388,397],[405,397],[410,430],[425,380],[430,480],[450,355],[470,480],[480,370],[500,400],[505,465],[520,400],[540,480],[555,360],[575,520],[590,410],[605,310],[630,465],[645,270],[665,400],[695,485],[705,400],[720,255],[735,420],[750,530],[760,350],[780,400],[800,490],[815,275],[825,390],[838,218],[845,218],[855,400],[870,420],[885,570],[898,280],[910,380],[920,480],[935,530],[948,395]]]
]);

draw("chart4", 763, 10, 0.85, [
    ["#1f77b4", [[695,995],[730,1005],[745,985],[800,965],[860,945],[920,930],[990,922],[1050,930],[1115,928]]],
    ["#ff7f0e", [[695,1090],[720,1110],[760,1075],[800,1100],[850,1040],[900,1010],[950,990],[1000,1000],[1050,985],[1115,995]]],
    ["#2ca02c", [[695,1005],[730,1030],[780,1055],[830,1010],[870,970],[930,960],[1000,970],[1060,950],[1115,965]]],
    ["#d62728", [[695,1130],[740,1140],[790,1105],[830,1110],[860,1150],[900,1120],[960,1060],[1000,1050],[1040,1000],[1115,1025]]],
    ["#9467bd", [[695,1120],[720,1085],[780,1055],[830,1060],[880,1010],[930,975],[990,985],[1115,975]]],
    ["#8c564b", [[695,1215],[730,1170],[790,1140],[840,1180],[880,1240],[900,1248],[950,1200],[980,1165],[1040,1180],[1060,1150]]],
    ["#e377c2", [[695,1060],[730,1030],[780,1000],[830,1010],[880,975],[930,940],[1000,945],[1060,940],[1115,950]]],
    ["#7f7f7f", [[695,1020],[740,1030],[790,1050],[830,1000],[900,980],[950,965],[1000,985],[1115,990]]],
    ["#bcbd22", [[695,1090],[730,1110],[760,1150],[790,1160],[830,1090],[880,1050],[930,1030],[980,1020],[1050,1005],[1115,1005]]],
    ["#17becf", [[695,1190],[720,1215],[770,1210],[790,1230],[830,1180],[890,1205],[940,1140],[990,1110],[1030,1075],[1060,1060]]],
    ["#2a5caa", [[695,1100],[750,1060],[800,1060],[860,1050],[930,975],[1000,1000],[1060,970],[1115,965]]]
]);

draw("chart5", 78, 16, 1.25, [
    ["#f28e2b", [[370,535],[378,580],[400,565],[430,545],[440,505],[450,545],[480,515],[500,550],[510,485],[530,490],[565,465],[600,450],[630,430],[655,430],[670,385],[700,325],[730,320],[770,320],[790,280],[830,265],[850,300],[885,250],[905,215],[935,245],[958,268]]],
    ["#3b7db5", [[370,365],[375,340],[400,325],[415,305],[445,365],[465,295],[480,255],[505,290],[515,255],[535,228],[560,360],[575,290],[605,405],[625,280],[650,370],[670,480],[690,410],[705,550],[725,490],[745,450],[765,370],[780,470],[810,575],[825,520],[835,490],[850,465],[870,440],[890,510],[905,515],[935,410],[945,420],[958,470]]]
]);

draw("chart6", 775, 16, 1.25, [
    ["#3b7db5", [[670,1020],[705,985],[770,985],[800,950],[840,950],[900,930],[955,950]]],
    ["#f28e2b", [[660,1020],[690,985],[720,955],[770,1020],[790,1000],[800,945],[850,935],[930,960],[955,1000]]],
    ["#3fa33f", [[660,1000],[675,960],[705,935],[725,960],[740,1030],[780,1030],[795,925],[830,930],[860,960],[890,940],[925,945],[938,1030]]],
    ["#000000", [[370,1060],[410,1000],[440,1020],[480,955],[505,985],[535,925],[560,1060],[575,985],[600,1100],[625,975],[650,1060]]]
]);
```
